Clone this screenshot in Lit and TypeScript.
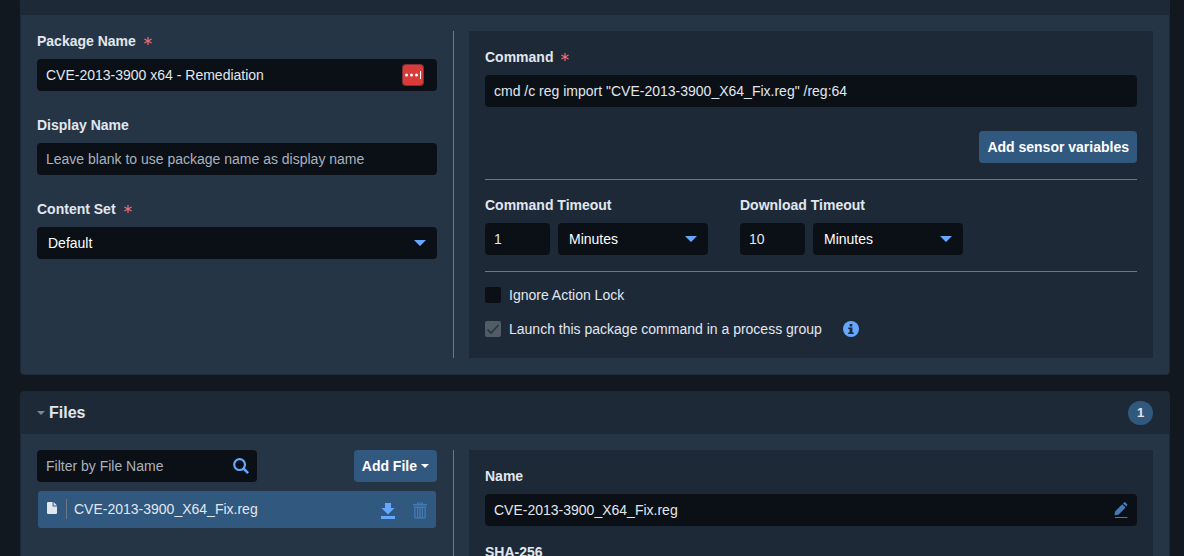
import { LitElement, html, css, svg } from "lit";
import { customElement } from "lit/decorators.js";

const caret = svg`<svg class="caret" width="12" height="6" viewBox="0 0 12 6" aria-hidden="true"><path d="M0 0h12L6.6 5.6q-.6.5-1.2 0z" fill="currentColor"/></svg>`;

@customElement("app-root")
export class AppRoot extends LitElement {
  static styles = css`
    :host {
      display: block;
      box-sizing: border-box;
      height: 100vh;
      overflow-y: auto;
      scrollbar-width: none;
      padding: 0 14px 0 20px;
      background: #11181f;
      color: #e1e7ee;
      font: 14px/20px "Liberation Sans", Arial, sans-serif;
    }
    *,
    *::before {
      box-sizing: border-box;
    }
    input,
    select,
    button {
      font: inherit;
      color: inherit;
      margin: 0;
      border: 0;
    }
    svg {
      display: block;
      flex: none;
    }
    .panel {
      border: 1px solid #1e2938;
      border-radius: 4px;
      background: #253546;
      margin-bottom: 16px;
    }
    .panel.first {
      border-top: 0;
      border-radius: 0 0 4px 4px;
    }
    .head {
      display: flex;
      align-items: center;
      justify-content: space-between;
      height: 42px;
      padding: 0 16px;
      background: #1e2938;
      border-radius: 3px 3px 0 0;
    }
    .head.cut {
      height: 15px;
      border-radius: 0;
    }
    .title {
      display: flex;
      align-items: center;
      gap: 4px;
      margin: 0;
      font-size: 16px;
      font-weight: bold;
    }
    .title svg {
      color: #7d879b;
    }
    .badge {
      width: 25px;
      border-radius: 12px;
      background: #31587f;
      font-size: 13px;
      font-weight: bold;
      line-height: 24px;
      text-align: center;
    }
    .body {
      display: grid;
      grid-template-columns: 416px 1fr;
      padding: 16px;
    }
    .left {
      padding-right: 16px;
    }
    .right {
      display: flex;
      border-left: 1px solid #6e7783;
      padding-left: 15px;
    }
    .card {
      flex: 1;
      min-width: 0;
      padding: 16px;
      background: #1e2938;
    }
    .field {
      display: flex;
      flex-direction: column;
      gap: 8px;
      min-width: 0;
    }
    .field + .field {
      margin-top: 24px;
    }
    .card > .field + .field {
      margin-top: 16px;
    }
    .label {
      display: flex;
      align-items: center;
      gap: 8px;
      font-weight: bold;
    }
    .box {
      display: flex;
      align-items: center;
      height: 32px;
      padding: 0 9px;
      border-radius: 4px;
      background: #0b1017;
    }
    .box input {
      flex: 1;
      min-width: 0;
      height: 32px;
      padding: 0;
      background: none;
      outline: 0;
    }
    .box input::placeholder {
      color: #a9b2bf;
      opacity: 1;
    }
    .named {
      padding-right: 13px;
    }
    .select {
      display: grid;
      align-items: center;
      border-radius: 4px;
      background: #0b1017;
      color: #65a7ff;
    }
    .select select {
      grid-area: 1 / 1;
      appearance: none;
      width: 100%;
      height: 32px;
      padding: 0 32px 0 11px;
      background: none;
      color: #fff;
    }
    .caret {
      grid-area: 1 / 1;
      justify-self: end;
      margin-right: 11px;
      pointer-events: none;
    }
    .button {
      height: 32px;
      padding: 0 8px;
      border-radius: 4px;
      background: #31587f;
      color: #fff;
      font-weight: bold;
      display: flex;
      align-items: center;
      gap: 4px;
    }
    .actions {
      display: flex;
      justify-content: flex-end;
      padding: 24px 0 16px;
    }
    .timeouts {
      display: flex;
      gap: 32px;
      padding: 15px 0 16px;
      border: solid #6e7783;
      border-width: 1px 0;
    }
    .timeouts .field {
      margin: 0;
    }
    .duration {
      display: grid;
      grid-template-columns: 65px 150px;
      gap: 8px;
    }
    .checks {
      display: flex;
      flex-direction: column;
      gap: 14px;
      padding: 13px 0 3px;
    }
    .check {
      display: flex;
      align-items: center;
      gap: 8px;
    }
    .check input {
      appearance: none;
      width: 16px;
      height: 16px;
      border-radius: 2px;
      background: #0b1017;
    }
    .tick {
      display: grid;
    }
    .tick > * {
      grid-area: 1 / 1;
    }
    .check input:disabled {
      background: #525c66;
    }
    .info {
      padding: 0;
      margin-left: 13px;
      background: none;
    }
    .toolbar {
      display: flex;
      justify-content: space-between;
      margin-bottom: 9px;
    }
    .search {
      width: 220px;
      padding-right: 8px;
    }
    .files {
      list-style: none;
      margin: 0;
      padding: 0 1px;
    }
    .file {
      display: flex;
      align-items: center;
      height: 37px;
      padding: 0 9px 2px;
      border-radius: 3px;
      background: #31587f;
    }
    .name {
      flex: 1;
      margin-left: 9px;
      padding-left: 7px;
      border-left: 1px solid #6e7783;
    }
    .icon {
      padding: 4px 0 0;
      background: none;
    }
    .icon + .icon {
      margin-left: 18px;
    }
  `;

  private star() {
    return html`<svg width="8" height="8" viewBox="0 0 8 8" aria-label="required"><path d="M4 0v8M.4 2l7.200 4M.4 6l7.200-4" stroke="#ee6b76" stroke-width="1.2"/></svg>`;
  }

  private duration(id: string, label: string, value: string) {
    return html`<div class="field">
      <label class="label" for=${id}>${label}</label>
      <div class="duration">
        <div class="box"><input id=${id} .value=${value} /></div>
        <div class="select">
          <select aria-label="${label} unit"><option>Minutes</option></select>${caret}
        </div>
      </div>
    </div>`;
  }

  render() {
    return html`
      <section class="panel first">
        <div class="head cut"></div>
        <div class="body">
          <div class="left">
            <div class="field">
              <label class="label" for="package">Package Name ${this.star()}</label>
              <div class="box named">
                <input id="package" .value=${"CVE-2013-3900 x64 - Remediation"} />
                <svg width="22" height="22" viewBox="0 0 22 22" aria-hidden="true">
                  <rect width="22" height="22" rx="4" fill="#7d3039"/>
                  <rect x="1" y="1" width="20" height="20" rx="3" fill="#d83b38"/>
                  <g fill="#fff"><circle cx="4.500" cy="11" r="1.500"/><circle cx="9.500" cy="11" r="1.500"/><circle cx="14.500" cy="11" r="1.500"/><path d="M18 7h1v8h-1z"/></g>
                </svg>
              </div>
            </div>
            <div class="field">
              <label class="label" for="display">Display Name</label>
              <div class="box"><input id="display" placeholder="Leave blank to use package name as display name" /></div>
            </div>
            <div class="field">
              <label class="label" for="content">Content Set ${this.star()}</label>
              <div class="select"><select id="content"><option>Default</option></select>${caret}</div>
            </div>
          </div>
          <div class="right">
            <div class="card">
              <div class="field">
                <label class="label" for="command">Command ${this.star()}</label>
                <div class="box"><input id="command" .value=${'cmd /c reg import "CVE-2013-3900_X64_Fix.reg" /reg:64'} /></div>
              </div>
              <div class="actions"><button class="button">Add sensor variables</button></div>
              <div class="timeouts">
                ${this.duration("cmd-timeout", "Command Timeout", "1")}
                ${this.duration("dl-timeout", "Download Timeout", "10")}
              </div>
              <div class="checks">
                <label class="check"><input type="checkbox" />Ignore Action Lock</label>
                <div class="check">
                  <label class="check">
                    <span class="tick">
                      <input type="checkbox" checked disabled />
                      <svg width="16" height="16" viewBox="0 0 16 16" aria-hidden="true"><path d="M2.500 8.600l3.500 3.400L13.500 4" fill="none" stroke="#253546" stroke-width="1.600"/></svg>
                    </span>Launch this package command in a process group</label>
                  <button class="info" aria-label="Information">
                    <svg width="16" height="16" viewBox="0 0 16 16"><circle cx="8" cy="8" r="8" fill="#65a7ff"/><path d="M6.700 3h2.600v2.400H6.700zM5.200 6.500h4.200v5h1.300V13H5.200v-1.500h1.400V8H5.200z" fill="#1e2938"/></svg>
                  </button>
                </div>
              </div>
            </div>
          </div>
        </div>
      </section>

      <section class="panel">
        <header class="head">
          <h2 class="title">
            <svg width="8" height="4" viewBox="0 0 8 4" aria-hidden="true"><path d="M0 0h8L4 4z" fill="currentColor"/></svg>Files
          </h2>
          <span class="badge">1</span>
        </header>
        <div class="body">
          <div class="left">
            <div class="toolbar">
              <div class="box search">
                <input aria-label="Filter by File Name" placeholder="Filter by File Name" />
                <svg width="16" height="16" viewBox="0 0 16 16" aria-hidden="true"><circle cx="6.600" cy="6.600" r="5.400" fill="none" stroke="#65a7ff" stroke-width="2.200"/><path d="M10.400 10.400l4.700 4.700" stroke="#65a7ff" stroke-width="2.600"/></svg>
              </div>
              <button class="button">Add File
                <svg width="8" height="4" viewBox="0 0 8 4" aria-hidden="true"><path d="M0 0h8L4 4z" fill="#fff"/></svg>
              </button>
            </div>
            <ul class="files">
              <li class="file">
                <svg width="10" height="14" viewBox="0 0 10 14" aria-hidden="true"><path d="M1 0h4.600v4.400H10V11q0 1-1 1H1q-1 0-1-1V1q0-1 1-1zM6.600 0L10 3.400H6.600z" fill="#e1e7ee"/></svg>
                <span class="name">CVE-2013-3900_X64_Fix.reg</span>
                <button class="icon" aria-label="Download">
                  <svg width="14" height="16" viewBox="0 0 14 16"><path d="M4 0h6v5h3.500L7 11.500.5 5H4zM0 13h14v3H0z" fill="#65a7ff"/></svg>
                </button>
                <button class="icon" aria-label="Delete">
                  <svg width="14" height="16" viewBox="0 1 14 16" overflow="visible" fill="#457bb5" fill-rule="evenodd"><path d="M4 0.500h6V2h4v1.500H0V2h4zM5 1.500V2h4v-.5zM1.200 4.500h11.600V15q0 1.500-1.500 1.500H2.700q-1.500 0-1.500-1.500zM2.500 6v8.500q0 .7.700.7H4V6zM5.200 6v9.200h1.100V6zM7.700 6v9.200h1.100V6zM10 6v9.200h.8q.7 0 .7-.7V6z"/></svg>
                </button>
              </li>
            </ul>
          </div>
          <div class="right">
            <div class="card">
              <div class="field">
                <label class="label" for="file-name">Name</label>
                <div class="box">
                  <input id="file-name" .value=${"CVE-2013-3900_X64_Fix.reg"} />
                  <svg width="14" height="16" viewBox="0 0 14 16" fill="#457bb5" aria-hidden="true"><path d="M1 9.600L8.200 2.200l3.400 3.400L4.400 12.700.5 13.200zM9 1.400L10.200.2q.5-.4 1 .1l2 2q.5.5 0 1L12.300 4.600zM1 15h12.500v1H1z"/></svg>
                </div>
              </div>
              <div class="field">
                <label class="label" for="sha">SHA-256</label>
                <div class="box"><input id="sha" readonly /></div>
              </div>
            </div>
          </div>
        </div>
      </section>
    `;
  }
}
